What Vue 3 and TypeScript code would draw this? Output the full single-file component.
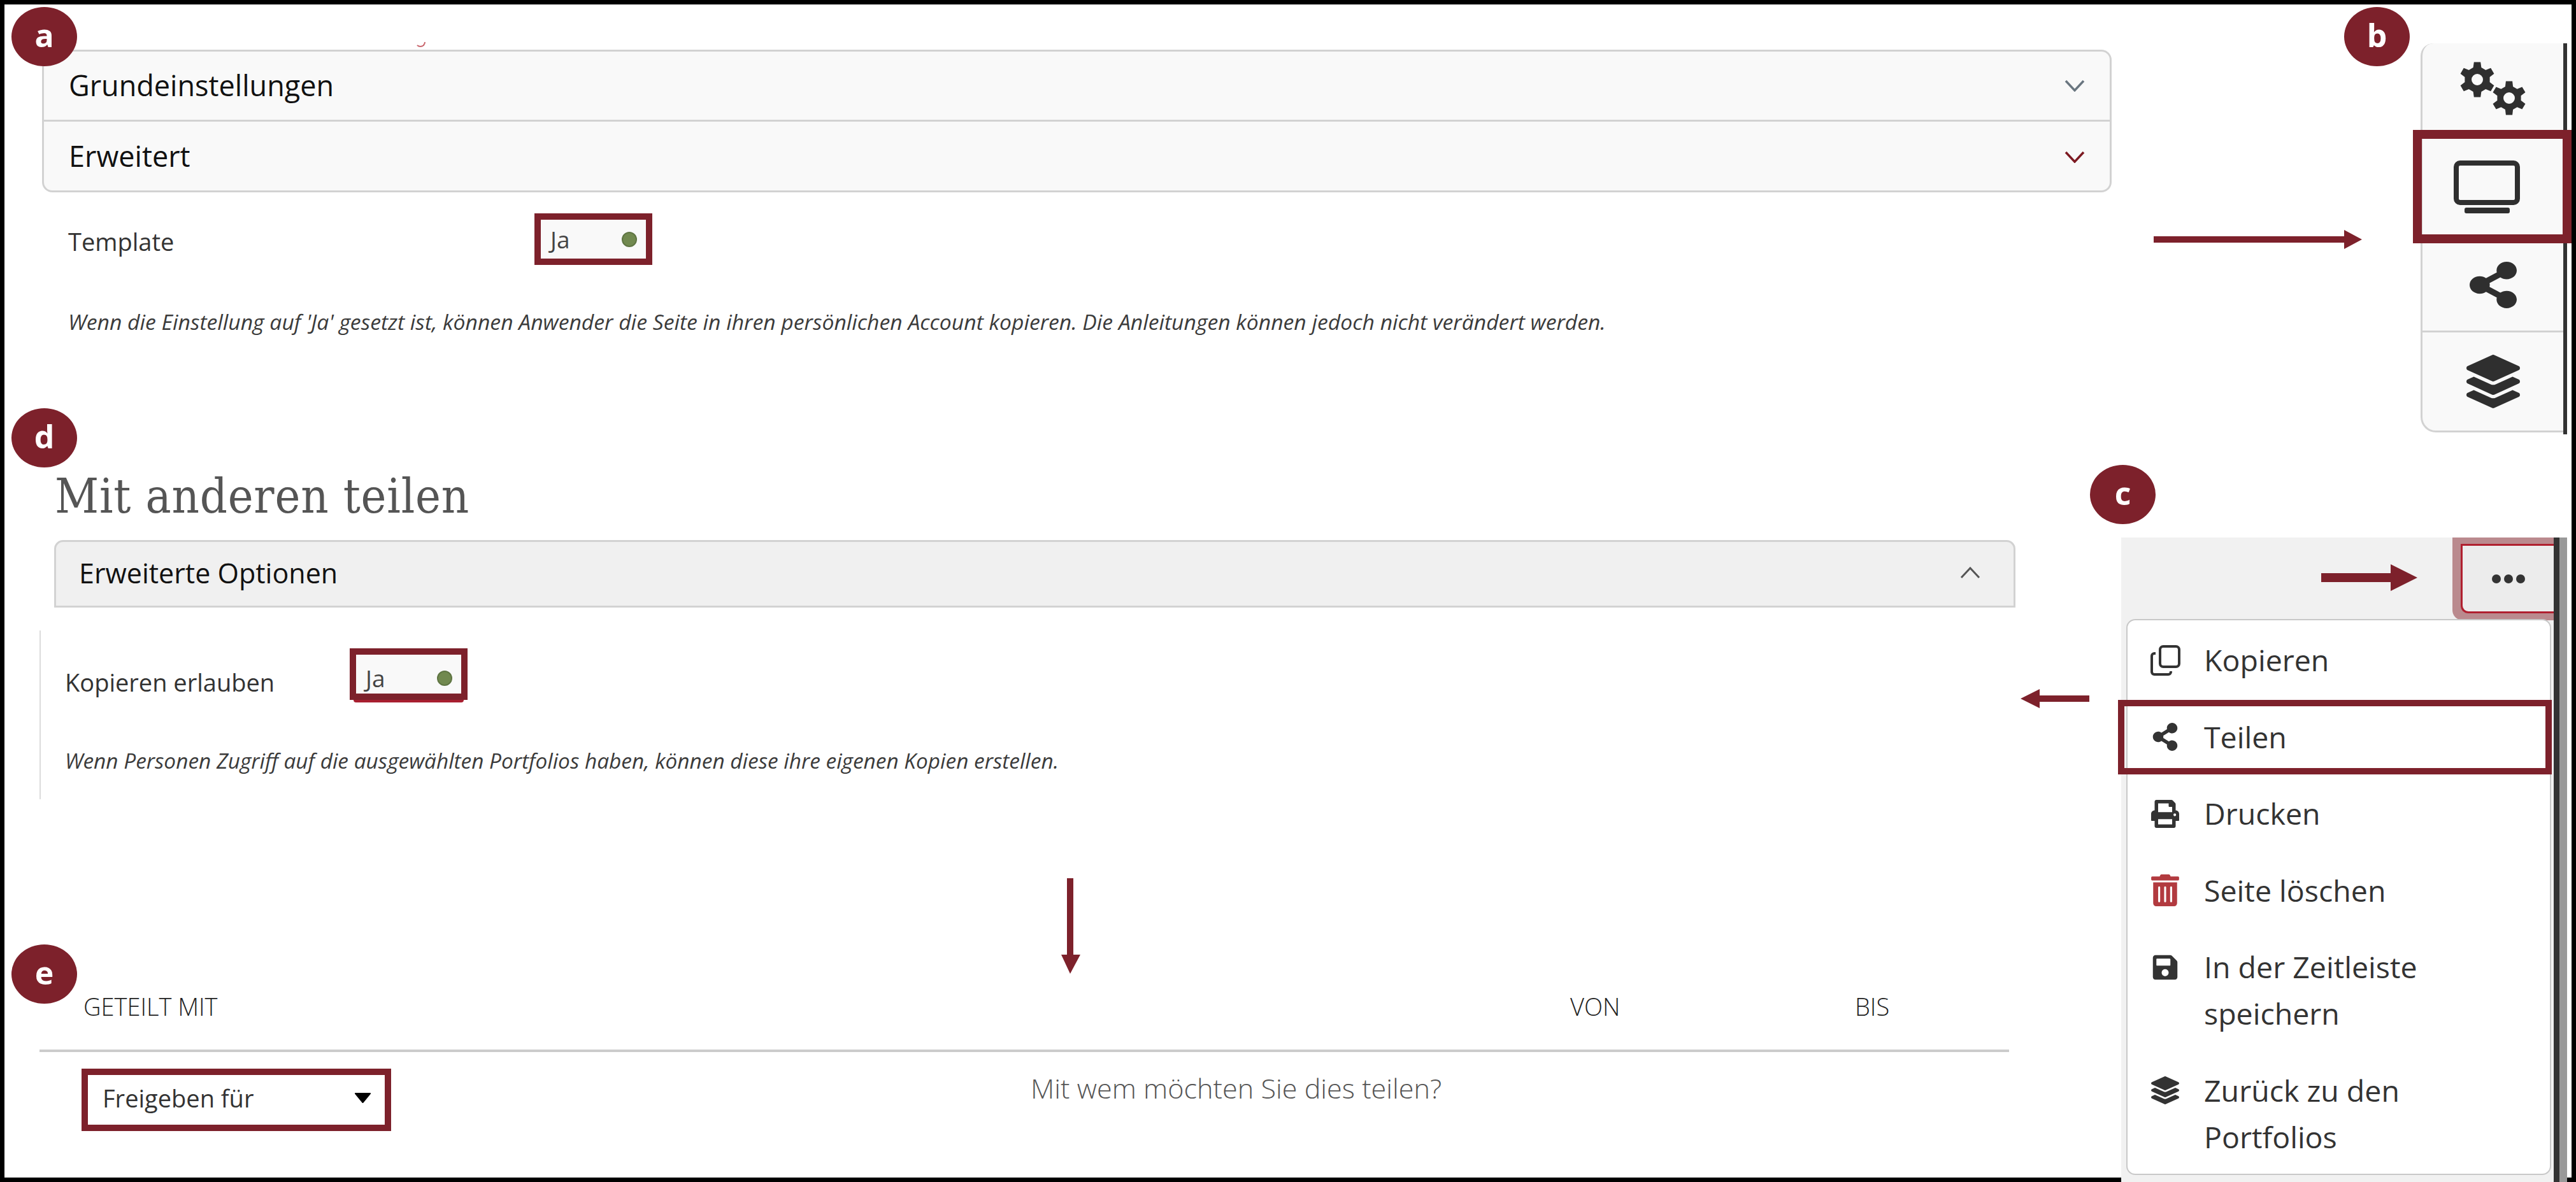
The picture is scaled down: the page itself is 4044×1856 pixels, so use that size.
<script setup lang="ts">
interface MenuItem {
  label: string
  icon: string
  view: string
  danger?: boolean
}

const gearPath = (cx: number, cy: number, outer: number, root: number, hole: number) => {
  const teeth = 6
  const pts: string[] = []
  for (let i = 0; i < teeth; i++) {
    const a = (i / teeth) * Math.PI * 2 + Math.PI / 2
    const step = Math.PI / teeth
    const corners: [number, number][] = [
      [root, a - step * 0.62],
      [outer, a - step * 0.36],
      [outer, a + step * 0.36],
      [root, a + step * 0.62],
    ]
    for (const [r, t] of corners) {
      pts.push(`${(cx + r * Math.cos(t)).toFixed(1)} ${(cy + r * Math.sin(t)).toFixed(1)}`)
    }
  }
  const ring = `M${cx - hole} ${cy}a${hole} ${hole} 0 1 0 ${hole * 2} 0a${hole} ${hole} 0 1 0 ${-hole * 2} 0z`
  return `M${pts.join('L')}z${ring}`
}

const gears = [gearPath(27, 28, 28, 20, 9), gearPath(77, 57, 27, 19, 9)]

const shareIcon = 'M352 320c-22.608 0-43.387 7.819-59.79 20.895l-102.486-64.054a96.551 96.551 0 0 0 0-41.683l102.486-64.054C308.613 184.181 329.392 192 352 192c53.019 0 96-42.981 96-96S405.019 0 352 0s-96 42.981-96 96c0 7.158.79 14.13 2.276 20.841L155.79 180.895C139.387 167.819 118.608 160 96 160c-53.019 0-96 42.981-96 96s42.981 96 96 96c22.608 0 43.387-7.819 59.79-20.895l102.486 64.054A96.301 96.301 0 0 0 256 416c0 53.019 42.981 96 96 96s96-42.981 96-96-42.981-96-96-96z'
const layersIcon = 'M12.41 148.02l232.94 105.67c6.8 3.09 14.49 3.09 21.29 0l232.94-105.67c16.55-7.51 16.55-32.52 0-40.03L266.65 2.31a25.607 25.607 0 0 0-21.29 0L12.41 107.98c-16.55 7.51-16.55 32.53 0 40.04zm487.18 88.28l-58.09-26.33-161.64 73.27c-7.56 3.43-15.59 5.17-23.86 5.17s-16.29-1.74-23.86-5.17L70.51 209.97l-58.1 26.33c-16.55 7.5-16.55 32.5 0 40l232.94 105.59c6.8 3.08 14.49 3.08 21.29 0L499.59 276.3c16.55-7.5 16.55-32.5 0-40zm0 127.8l-57.87-26.23-161.86 73.37c-7.56 3.43-15.59 5.17-23.86 5.17s-16.29-1.74-23.86-5.17L70.29 337.87 12.41 364.1c-16.55 7.5-16.55 32.5 0 40l232.94 105.59c6.8 3.08 14.49 3.08 21.29 0L499.59 404.1c16.55-7.5 16.55-32.5 0-40z'

const menu: MenuItem[] = [
  { label: 'Kopieren', icon: '', view: '0 0 24 24' },
  { label: 'Teilen', icon: shareIcon, view: '0 0 448 512' },
  { label: 'Drucken', icon: 'M448 192V77.25c0-8.49-3.37-16.62-9.37-22.63L393.37 9.37c-6-6-14.14-9.37-22.63-9.37H96C78.33 0 64 14.33 64 32v160c-35.35 0-64 28.65-64 64v112c0 8.84 7.16 16 16 16h48v96c0 17.67 14.33 32 32 32h320c17.67 0 32-14.33 32-32v-96h48c8.84 0 16-7.16 16-16V256c0-35.35-28.65-64-64-64zm-64 256H128v-96h256v96zm0-224H128V64h192v48c0 8.84 7.16 16 16 16h48v96zm48 72c-13.25 0-24-10.75-24-24 0-13.26 10.75-24 24-24s24 10.74 24 24c0 13.25-10.75 24-24 24z', view: '0 0 512 512' },
  { label: 'Seite löschen', icon: 'M32 464a48 48 0 0 0 48 48h288a48 48 0 0 0 48-48V128H32zm272-256a16 16 0 0 1 32 0v224a16 16 0 0 1-32 0zm-96 0a16 16 0 0 1 32 0v224a16 16 0 0 1-32 0zm-96 0a16 16 0 0 1 32 0v224a16 16 0 0 1-32 0zM432 32H312l-9.4-18.7A24 24 0 0 0 281.1 0H166.8a23.72 23.72 0 0 0-21.4 13.3L136 32H16A16 16 0 0 0 0 48v32a16 16 0 0 0 16 16h416a16 16 0 0 0 16-16V48a16 16 0 0 0-16-16z', view: '0 0 448 512', danger: true },
  { label: 'In der Zeitleiste speichern', icon: 'M433.941 129.941l-83.882-83.882A48 48 0 0 0 316.118 32H48C21.49 32 0 53.49 0 80v352c0 26.51 21.49 48 48 48h352c26.51 0 48-21.49 48-48V163.882a48 48 0 0 0-14.059-33.941zM224 416c-35.346 0-64-28.654-64-64 0-35.346 28.654-64 64-64s64 28.654 64 64c0 35.346-28.654 64-64 64zm96-304.52V212c0 6.627-5.373 12-12 12H76c-6.627 0-12-5.373-12-12V108c0-6.627 5.373-12 12-12h228.52c3.183 0 6.235 1.264 8.485 3.515l3.48 3.48A11.996 11.996 0 0 1 320 111.48z', view: '0 0 448 512' },
  { label: 'Zurück zu den Portfolios', icon: layersIcon, view: '0 0 512 512' },
]

const badges = ['a', 'b', 'c', 'd', 'e']

// annotation arrows, drawn in page coordinates
const arrows = [
  '3381,371 3680,371 3680,361 3708,376 3680,391 3680,381 3381,381',
  '3644,900 3753,900 3753,886 3795,907 3753,928 3753,914 3644,914',
  '3280,1092 3202,1092 3202,1082 3172,1097 3202,1112 3202,1102 3280,1102',
  '1675,1379 1685,1379 1685,1499 1696,1499 1680,1529 1666,1499 1675,1499',
]
</script>

<template>
  <div class="shot">
    <div class="left">
      <section class="settings">
        <div class="accordion">
          <div class="acc-row">
            <span>Grundeinstellungen</span>
            <svg class="chev" viewBox="0 0 32 19"><path d="M2 2l14 15L30 2" fill="none" stroke="#6a7680" stroke-width="3.5" /></svg>
          </div>
          <div class="acc-row acc-open">
            <span>Erweitert</span>
            <svg class="chev" viewBox="0 0 32 19"><path d="M2 2l14 15L30 2" fill="none" stroke="#7d1a22" stroke-width="3.5" /></svg>
          </div>
        </div>
        <div class="form-row template-row">
          <span class="form-label template-label">Template</span>
          <div class="toggle"><span>Ja</span><i class="dot"></i></div>
        </div>
        <p class="hint template-hint">Wenn die Einstellung auf 'Ja' gesetzt ist, können Anwender die Seite in ihren persönlichen Account kopieren. Die Anleitungen können jedoch nicht verändert werden.</p>
      </section>

      <section class="sharing">
        <h1>Mit anderen teilen</h1>
        <div class="options-head">
          <span>Erweiterte Optionen</span>
          <svg class="chev-up" viewBox="0 0 32 19"><path d="M2 17L16 2l14 15" fill="none" stroke="#555" stroke-width="3" /></svg>
        </div>
        <div class="options-body">
          <div class="form-row">
            <span class="form-label copy-label">Kopieren erlauben</span>
            <div class="toggle toggle-copy"><span>Ja</span><i class="dot"></i></div>
          </div>
          <p class="hint copy-hint">Wenn Personen Zugriff auf die ausgewählten Portfolios haben, können diese ihre eigenen Kopien erstellen.</p>
        </div>
      </section>

      <section class="shared">
        <div class="shared-head">
          <span>GETEILT MIT</span>
          <span>VON</span>
          <span>BIS</span>
        </div>
        <div class="shared-row">
          <div class="select">
            <span>Freigeben für</span>
            <svg class="caret" viewBox="0 0 25 16"><path d="M1 0h23a1 1 0 0 1 1 1.500L13.500 15.500a1.300 1.300 0 0 1-2 0L0 1.500A1 1 0 0 1 1 0z" fill="#000" /></svg>
          </div>
          <span class="ask">Mit wem möchten Sie dies teilen?</span>
        </div>
      </section>
    </div>

    <div class="right">
      <nav class="sidetabs">
        <div class="tab tab-gears">
          <svg class="gears" viewBox="0 0 104 85"><path v-for="g in gears" :key="g" :d="g" fill="#2f2f2f" fill-rule="evenodd" /></svg>
        </div>
        <div class="tab tab-screen">
          <svg class="screen" viewBox="0 0 104 83">
            <rect x="4" y="4" width="96" height="62" rx="6" fill="none" stroke="#2f2f2f" stroke-width="8" />
            <rect x="17" y="74" width="71" height="9" rx="3" fill="#2f2f2f" />
          </svg>
        </div>
        <div class="tab tab-share">
          <svg class="tab-icon-share" viewBox="0 0 448 512" preserveAspectRatio="none"><path :d="shareIcon" fill="#2f2f2f" /></svg>
        </div>
        <div class="tab tab-layers">
          <svg class="tab-icon-layers" viewBox="0 0 512 512" preserveAspectRatio="none"><path :d="layersIcon" fill="#2f2f2f" /></svg>
        </div>
      </nav>

      <div class="toolbar">
        <div class="toolbar-head">
          <button class="more">
            <span class="more-inner"><i></i><i></i><i></i></span>
          </button>
        </div>
        <ul class="menu">
          <li v-for="item in menu" :key="item.label" class="menu-item">
            <span class="menu-icon">
              <svg v-if="!item.icon" class="icon-copy" viewBox="0 0 47 48" fill="none" stroke="#333" stroke-width="4">
                <rect x="15" y="2" width="30" height="32" rx="5" />
                <path d="M8 13H6a4 4 0 0 0-4 4v25a4 4 0 0 0 4 4h22a4 4 0 0 0 4-4v-1" />
              </svg>
              <svg v-else :class="['icon-fa', { 'icon-danger': item.danger }]" :viewBox="item.view"><path :d="item.icon" /></svg>
            </span>
            <span class="menu-label">{{ item.label }}</span>
          </li>
        </ul>
      </div>
    </div>

    <span class="cut-arc"></span>

    <div class="mark mark-screen"></div>
    <div class="mark mark-teilen"></div>

    <svg class="arrows" viewBox="0 0 4044 1856">
      <polygon v-for="a in arrows" :key="a" :points="a" fill="#7d212b" />
    </svg>

    <span v-for="b in badges" :key="b" :class="['badge', `badge-${b}`]">{{ b }}</span>
  </div>
</template>

<style scoped>
.shot {
  position: relative;
  width: 4044px;
  height: 1856px;
  overflow: hidden;
  display: grid;
  grid-template-columns: 3330px 714px;
  background: #fff;
  outline: 7px solid #000;
  outline-offset: -7px;
  font-family: "Open Sans", sans-serif;
  color: #333;
}

/* left column */
.settings {
  padding: 78px 0 0 66px;
  width: 3249px;
}

.accordion {
  border: 3px solid #d2d2d2;
  border-radius: 16px;
  background: #f9f9f9;
  height: 224px;
  box-sizing: border-box;
}

.acc-row {
  height: 110px;
  display: flex;
  align-items: center;
  justify-content: space-between;
  padding: 0 39px 3px 39px;
  font-size: 45px;
  color: #111;
  box-sizing: border-box;
}

.acc-row:first-child {
  border-bottom: 3px solid #d2d2d2;
}

.chev {
  width: 32px;
  height: 19px;
  margin-top: 3px;
}

.form-row {
  display: flex;
  align-items: flex-start;
}

.template-row {
  margin-top: 33px;
  padding-left: 41px;
}

.form-label {
  font-size: 38px;
  line-height: 52px;
}

.template-label {
  width: 732px;
  padding-top: 18px;
}

.copy-label {
  width: 447px;
  margin-left: -1px;
  padding-top: 27px;
}

.toggle {
  width: 185px;
  height: 81px;
  box-sizing: border-box;
  border: 10px solid #7d212b;
  background: #f9f9f9;
  display: flex;
  align-items: center;
  justify-content: space-between;
  padding: 0 14px 0 15px;
  font-size: 37px;
  color: #444;
}

.toggle-copy {
  position: relative;
  padding-top: 12px;
}

/* the red focus line of the field shows under the marker */
.toggle-copy::after {
  content: '';
  position: absolute;
  left: -4px;
  right: -4px;
  bottom: -14px;
  height: 4px;
  background: #a81f30;
  border-radius: 0 0 6px 6px;
}

.dot {
  width: 24px;
  height: 24px;
  border-radius: 50%;
  background: #71894f;
  border: 2px solid #5f7543;
  box-sizing: border-box;
}

.hint {
  margin: 0;
  line-height: 50px;
  font-style: italic;
  color: #3b3b3b;
  white-space: nowrap;
}

.template-hint {
  margin-top: 64px;
  margin-left: 41px;
  font-size: 33.700px;
}

.sharing h1 {
  margin: 205px 0 0 86px;
  font-family: "DejaVu Serif Condensed", "DejaVu Serif", serif;
  font-weight: 400;
  font-size: 75px;
  line-height: 88px;
  letter-spacing: 0.800px;
  color: #555;
}

.options-head {
  margin: 25px 0 0 85px;
  width: 3079px;
  height: 106px;
  box-sizing: border-box;
  border: 3px solid #d2d2d2;
  border-radius: 14px 14px 0 0;
  background: #f0f0f0;
  display: flex;
  align-items: center;
  justify-content: space-between;
  padding: 0 52px 4px 36px;
  font-size: 43px;
  color: #111;
}

.chev-up {
  width: 32px;
  height: 19px;
}

.options-body {
  margin: 36px 0 0 62px;
  height: 265px;
  box-sizing: border-box;
  border-left: 2px solid #dcdcdc;
  padding: 28px 0 0 39px;
}

.copy-hint {
  margin-top: 70px;
  margin-left: -1px;
  font-size: 33.400px;
}

.shared {
  margin: 280px 0 0 62px;
  width: 3092px;
}

.shared-head {
  height: 113px;
  border-bottom: 4px solid #ccc;
  display: grid;
  grid-template-columns: 2403px 447px 1fr;
  font-size: 38px;
  font-weight: 300;
  line-height: 90px;
  color: #222;
}

.shared-head span:first-child {
  padding-left: 69px;
}

.shared-row {
  display: flex;
  align-items: flex-start;
  margin-top: 26px;
  padding-left: 66px;
}

.select {
  width: 486px;
  height: 98px;
  box-sizing: border-box;
  border: 10px solid #7d212b;
  display: flex;
  align-items: center;
  justify-content: space-between;
  padding: 0 22px 6px 23px;
  font-size: 38px;
  color: #333;
}

.caret {
  width: 25px;
  height: 16px;
}

.ask {
  margin-left: 1004px;
  font-size: 43.200px;
  font-weight: 300;
  line-height: 62px;
  color: #555;
}

/* right column */
.right {
  padding-top: 68px;
}

.sidetabs {
  margin-left: 470px;
  width: 230px;
  height: 614px;
  box-sizing: border-box;
  border-right: 6px solid #333;
  display: flex;
  flex-direction: column;
}

.tab {
  display: flex;
  align-items: center;
  justify-content: center;
  background: #f9f9f9;
  border-left: 3px solid #d2d2d2;
  box-sizing: border-box;
}

.tab-gears {
  height: 143px;
  border-top-left-radius: 20px;
}

.tab-screen {
  height: 164px;
}

.tab-share {
  height: 147px;
  border-bottom: 3px solid #d2d2d2;
}

.tab-layers {
  height: 157px;
  border-bottom: 3px solid #d2d2d2;
  border-bottom-left-radius: 24px;
}

.gears {
  width: 104px;
  height: 85px;
}

.screen {
  width: 104px;
  height: 83px;
  margin-right: 20px;
}

.tab-icon-share {
  width: 74px;
  height: 73px;
}

.tab-icon-layers {
  width: 84px;
  height: 84px;
}

.toolbar {
  margin-top: 162px;
  width: 700px;
  height: 1012px;
  box-sizing: border-box;
  background: #f1f1f1;
  border-right: 12px solid #999;
  position: relative;
}

.toolbar::after {
  content: '';
  position: absolute;
  top: 0;
  bottom: 0;
  right: 0;
  width: 9px;
  background: #333;
}

.toolbar-head {
  height: 128px;
  display: flex;
  justify-content: flex-end;
  padding-right: 9px;
}

.more {
  width: 159px;
  height: 130px;
  padding: 10px 0 11px 13px;
  box-sizing: border-box;
  border: 0;
  border-bottom-left-radius: 16px;
  background: #ba8a8e;
  position: relative;
  z-index: 1;
}

.more-inner {
  display: flex;
  align-items: center;
  justify-content: center;
  gap: 5px;
  height: 100%;
  box-sizing: border-box;
  background: #ececec;
  border: 3px solid #b0202f;
  border-right: 0;
  border-bottom-left-radius: 12px;
}

.more-inner i {
  width: 14px;
  height: 14px;
  border-radius: 50%;
  background: #333;
}

.menu {
  list-style: none;
  margin: 0 0 0 8px;
  padding: 2px 0 0;
  width: 667px;
  height: 873px;
  box-sizing: border-box;
  background: #fff;
  border: 2px solid #c8c8c8;
  border-radius: 14px;
  position: relative;
  z-index: 2;
}

.menu-item {
  display: flex;
  align-items: flex-start;
  padding: 24px 100px 23.500px 34px;
  font-size: 46.500px;
  line-height: 73px;
  color: #333;
}

.menu-icon {
  flex: none;
  width: 50px;
  height: 73px;
  margin-right: 36px;
  display: flex;
  align-items: center;
  justify-content: center;
}

.icon-copy {
  width: 47px;
  height: 48px;
}

.icon-fa {
  width: 44px;
  height: 44px;
  fill: #333;
}

.icon-danger {
  height: 50px;
  fill: #b23a3f;
}

/* overlays */
.cut-arc {
  position: absolute;
  left: 652px;
  top: 60px;
  width: 16px;
  height: 14px;
  box-sizing: border-box;
  border: 2px solid #c9676e;
  border-top: 0;
  border-left-color: transparent;
  border-radius: 0 0 9px 9px;
  clip-path: inset(6px 0 0 0);
}

.mark {
  position: absolute;
  z-index: 3;
  box-sizing: border-box;
  border-style: solid;
  border-color: #7d212b;
}

.mark-screen {
  left: 3788px;
  top: 204px;
  width: 249px;
  height: 178px;
  border-width: 14px;
}

.mark-teilen {
  left: 3325px;
  top: 1099px;
  width: 681px;
  height: 117px;
  border-width: 10px;
}

.arrows {
  position: absolute;
  z-index: 3;
  left: 0;
  top: 0;
  width: 4044px;
  height: 1856px;
  pointer-events: none;
}

.badge {
  position: absolute;
  z-index: 4;
  width: 103px;
  height: 93px;
  border-radius: 50%;
  background: #7d212b;
  color: #fff;
  font-weight: 700;
  font-size: 50px;
  line-height: 88px;
  text-align: center;
}

.badge-a { left: 18px; top: 11px; }
.badge-b { left: 3680px; top: 11px; }
.badge-c { left: 3281px; top: 730px; }
.badge-d { left: 18px; top: 641px; }
.badge-e { left: 18px; top: 1483px; }
</style>
